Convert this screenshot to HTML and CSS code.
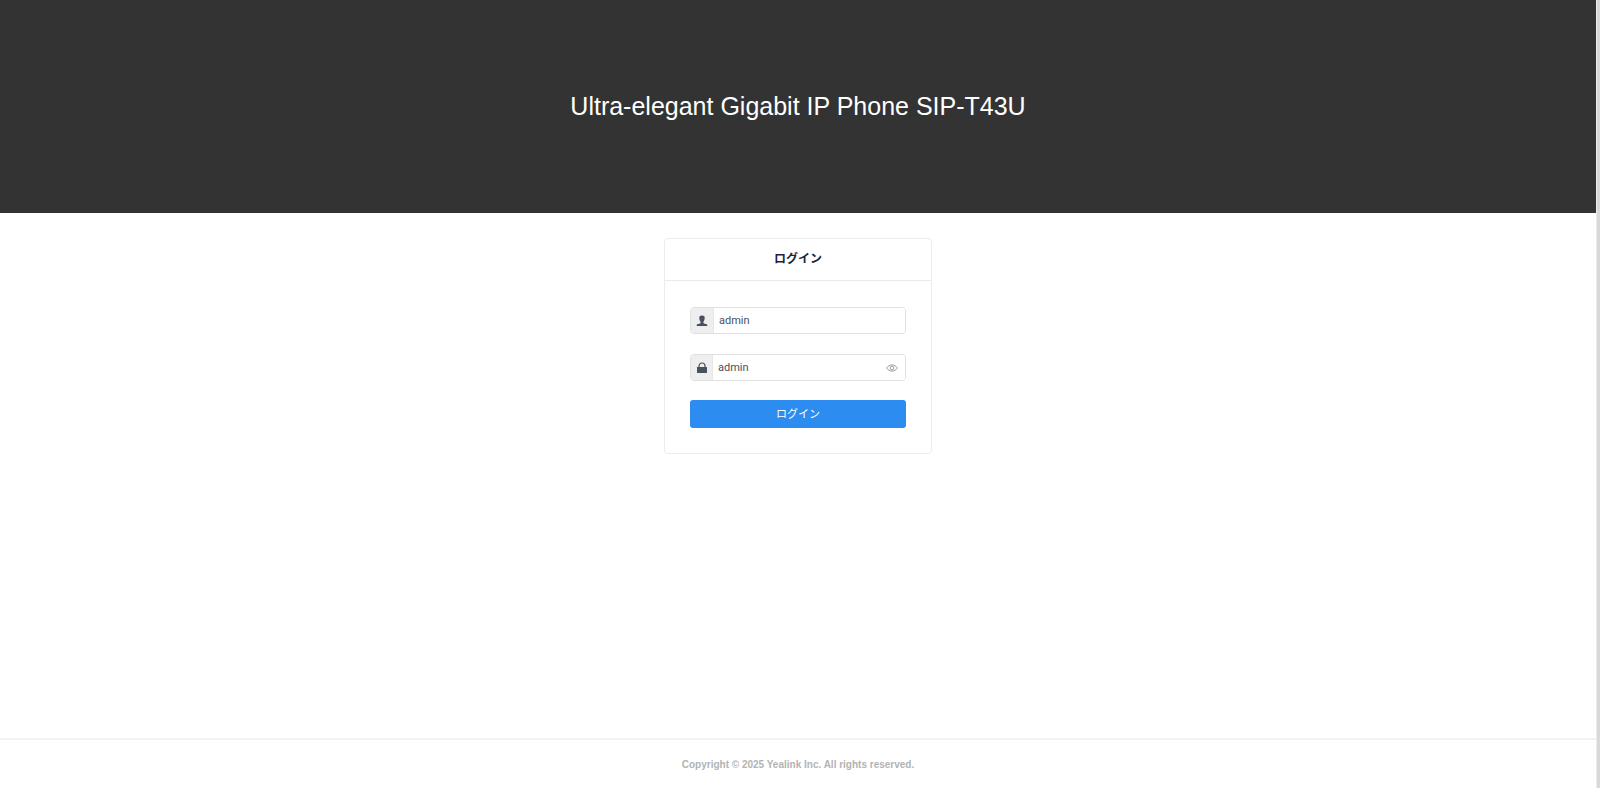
FILE: index.html
```html
<!DOCTYPE html>
<html lang="ja">
<head>
<meta charset="utf-8">
<title>SIP-T43U</title>
<link rel="stylesheet" href="styles.css">
</head>
<body>
<div class="page">
  <header class="banner"><h1 class="title">Ultra-elegant Gigabit IP Phone SIP-T43U</h1></header>
  <main class="main">
    <form class="card">
      <h2 class="card-title">ログイン</h2>
      <div class="card-body">
        <div class="field">
          <label class="addon addon-user" for="user" aria-label="ユーザー名">
            <svg width="12" height="12" viewBox="0 0 12 12" fill="currentColor"><path d="M6 .5C7.900.5 8.700 1.300 8.700 2.800c0 1.800-.5 3-1.300 3.900V8c.5.9 3.900.9 3.900 2v1H.7v-1c0-1.100 3.400-1.100 3.900-2V6.700C3.800 5.800 3.300 4.600 3.300 2.800 3.300 1.300 4.100.5 6 .5z"/></svg>
          </label>
          <input class="input" id="user" type="text" value="admin">
        </div>
        <div class="field">
          <label class="addon" for="pass" aria-label="パスワード">
            <svg width="12" height="12" viewBox="0 0 12 12"><path d="M3 6V4a3 3 0 0 1 6 0V6" fill="none" stroke="currentColor" stroke-width="1.200"/><rect x="1" y="5" width="10" height="6" rx=".4" fill="currentColor"/></svg>
          </label>
          <input class="input" id="pass" type="text" value="admin">
          <button class="eye" type="button" aria-label="表示">
            <svg width="12" height="8" viewBox="0 0 12 8" fill="none" stroke="currentColor" stroke-width=".8"><path d="M.6 4C3.400-.1 8.600-.1 11.400 4 8.600 8.100 3.400 8.100.6 4z"/><circle cx="6" cy="4" r="1.800"/></svg>
          </button>
        </div>
        <button class="submit" type="submit">ログイン</button>
      </div>
    </form>
  </main>
  <footer class="footer">Copyright © 2025 Yealink Inc. All rights reserved.</footer>
</div>
<div class="scroll-track"></div>
</body>
</html>
```
FILE: styles.css
```css
* { box-sizing: border-box; }

body {
  margin: 0;
  min-height: 100vh;
  display: flex;
  background: #fff;
  color: #495060;
  font-family: "Liberation Sans", "Noto Sans CJK JP", sans-serif;
}

.page { flex: 1; display: flex; flex-direction: column; }

.scroll-track {
  width: 4px;
  background: #d9d9d9;
  border-left: 1px solid #ececec;
}

.banner {
  min-height: 213px;
  padding-bottom: 2px;
  display: flex;
  align-items: center;
  justify-content: center;
  background: #333;
}

.title {
  margin: 0;
  color: #fff;
  font-size: 25px;
  font-weight: 400;
  line-height: 32px;
}

.main { flex: 1; display: flex; justify-content: center; align-items: flex-start; padding: 25px 0; }

.card {
  width: 268px;
  border: 1px solid #ebecee;
  border-radius: 4px;
}

.card-title {
  margin: 0;
  padding: 10px;
  border-bottom: 1px solid #e9eaec;
  color: #1c2438;
  font-size: 12px;
  line-height: 21px;
  text-align: center;
}

.card-body { padding: 26px 25px 25px; display: flex; flex-direction: column; }

.field {
  display: flex;
  height: 27px;
  margin-bottom: 20px;
  border: 1px solid #dfe0e2;
  border-radius: 4px;
  overflow: hidden;
}

.addon {
  width: 22px;
  display: flex;
  align-items: center;
  justify-content: center;
  background: #eee;
  border-right: 1px solid #e6e7e9;
}

.addon-user { width: 23px; }

.input {
  flex: 1;
  min-width: 0;
  padding: 0 5px;
  border: 0;
  outline: 0;
  background: #fff;
  color: #495060;
  font-family: Roboto, sans-serif;
  font-size: 11px;
}

.eye {
  width: 26px;
  padding: 0;
  border: 0;
  background: #fff;
  color: #80848f;
  display: flex;
  align-items: center;
  justify-content: center;
}

.submit {
  height: 28px;
  padding: 0 0 2px;
  margin-top: -1px;
  border: 0;
  border-radius: 3px;
  background: #2d8cf0;
  color: #fff;
  font-family: inherit;
  font-size: 11px;
}

.footer {
  border-top: 2px solid #f2f2f2;
  padding: 17px 0 16px;
  color: #b3b3b3;
  font-size: 10px;
  font-weight: 700;
  line-height: 15px;
  text-align: center;
}
```
